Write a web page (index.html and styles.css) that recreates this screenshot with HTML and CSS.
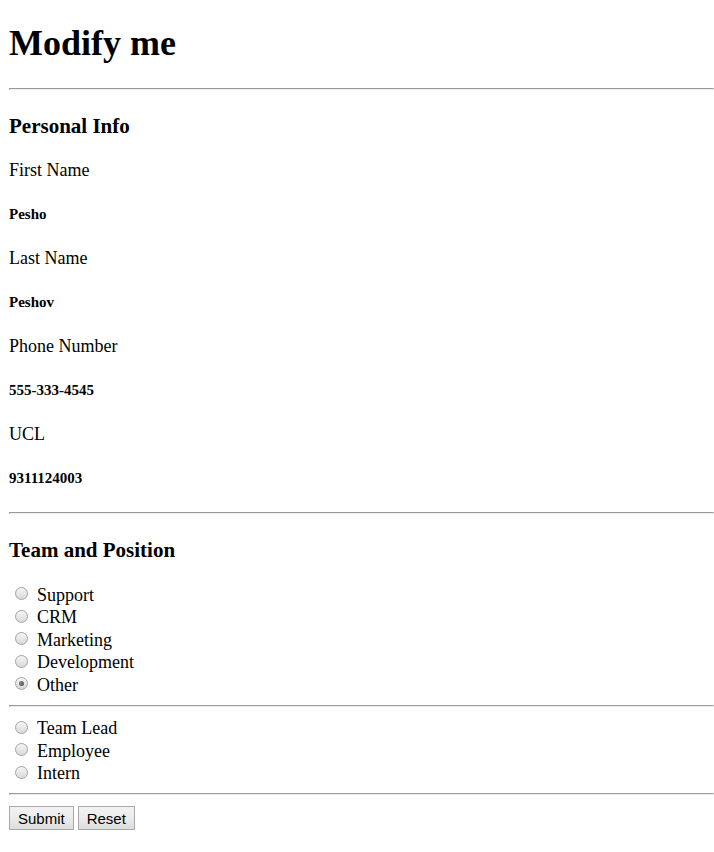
FILE: index.html
```html
<!DOCTYPE html>
<html lang="en">
<head>
<meta charset="utf-8">
<title>Modify me</title>
<link rel="stylesheet" href="styles.css">
</head>
<body>
<h1 class="title">Modify me</h1>
<hr class="rule">
<h3 class="section">Personal Info</h3>
<p class="label">First Name</p>
<h5 class="value">Pesho</h5>
<p class="label">Last Name</p>
<h5 class="value">Peshov</h5>
<p class="label">Phone Number</p>
<h5 class="value">555-333-4545</h5>
<p class="label">UCL</p>
<h5 class="value">9311124003</h5>
<hr class="rule">
<h3 class="section">Team and Position</h3>
<form class="form">
  <div class="group">
    <label class="option"><input class="radio" type="radio" name="team"><span>Support</span></label>
    <label class="option"><input class="radio" type="radio" name="team"><span>CRM</span></label>
    <label class="option"><input class="radio" type="radio" name="team"><span>Marketing</span></label>
    <label class="option"><input class="radio" type="radio" name="team"><span>Development</span></label>
    <label class="option"><input class="radio" type="radio" name="team" checked><span>Other</span></label>
  </div>
  <hr class="rule rule-form">
  <div class="group">
    <label class="option"><input class="radio" type="radio" name="pos"><span>Team Lead</span></label>
    <label class="option"><input class="radio" type="radio" name="pos"><span>Employee</span></label>
    <label class="option"><input class="radio" type="radio" name="pos"><span>Intern</span></label>
  </div>
  <hr class="rule rule-form">
  <div class="actions">
    <button class="btn" type="submit">Submit</button>
    <button class="btn" type="reset">Reset</button>
  </div>
</form>
</body>
</html>
```

FILE: styles.css
```css
html, body {
  background: #ffffff;
}

body {
  margin: 0;
  padding: 0 9px;
  font-family: "Liberation Serif", "Times New Roman", serif;
  font-size: 18px;
  color: #000000;
}

.title {
  font-size: 36px;
  font-weight: bold;
  margin: 22px 0 24px;
}

.rule {
  height: 0;
  margin: 9px -9px 9px 0;
  border-style: solid;
  border-width: 1px;
  border-color: #9a9a9a #eeeeee #eeeeee #9a9a9a;
}

.rule-form {
  margin-top: 8px;
  margin-bottom: 11px;
}

.section {
  font-size: 21px;
  font-weight: bold;
  margin: 24px 0 21px;
}

.label {
  font-size: 18px;
  margin: 18px 0;
}

.value {
  font-size: 15px;
  font-weight: bold;
  margin: 25px 0;
}

.form {
  margin: 0;
}

.group {
  display: flex;
  flex-direction: column;
}

.option {
  display: flex;
  align-items: center;
  height: 22.5px;
}

.radio {
  -webkit-appearance: none;
  appearance: none;
  box-sizing: border-box;
  width: 13px;
  height: 13px;
  margin: 0 9px 3px 6px;
  border: 1px solid #a3a3a3;
  border-radius: 50%;
  background: linear-gradient(#f6f6f6, #d9d9d9);
  position: relative;
}

.radio:checked::after {
  content: "";
  position: absolute;
  left: 3px;
  top: 3px;
  width: 5px;
  height: 5px;
  border-radius: 50%;
  background: radial-gradient(circle at 40% 40%, #8a8a8a, #444444);
}

.actions {
  display: flex;
  gap: 4px;
}

.btn {
  font-family: "Liberation Sans", Arial, sans-serif;
  font-size: 15px;
  color: #000000;
  height: 24px;
  padding: 0 8px;
  border: 1px solid #a9a9a9;
  border-radius: 0;
  background: linear-gradient(#f2f2f2, #ededed 40%, #dedede);
}
```
